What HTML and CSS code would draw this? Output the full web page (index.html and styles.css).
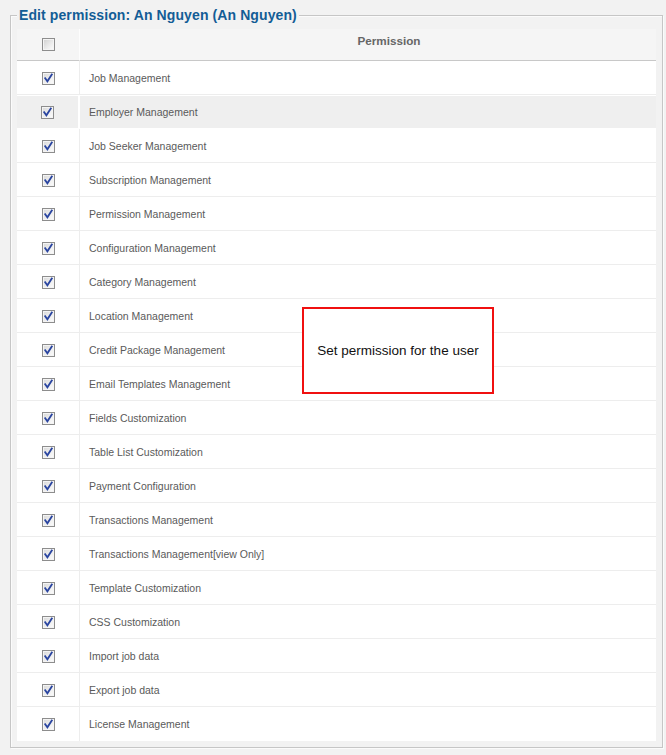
FILE: index.html
```html
<!DOCTYPE html>
<html>
<head>
<meta charset="utf-8">
<link rel="stylesheet" href="styles.css">
</head>
<body>
<fieldset class="perm">
  <legend class="perm-title">Edit permission: An Nguyen (An Nguyen)</legend>
  <table class="list">
    <thead>
      <tr>
        <th class="col-check"><span class="cb"></span></th>
        <th class="col-name">Permission</th>
      </tr>
    </thead>
    <tbody>
      <tr><td class="col-check"><span class="cb on"><svg viewBox="0 0 11 11"><polyline points="2.2,5.2 4.4,8.3 8.8,1.6"/></svg></span></td><td class="col-name">Job Management</td></tr>
      <tr class="hl"><td class="col-check"><span class="cb on"><svg viewBox="0 0 11 11"><polyline points="2.2,5.2 4.4,8.3 8.8,1.6"/></svg></span></td><td class="col-name">Employer Management</td></tr>
      <tr><td class="col-check"><span class="cb on"><svg viewBox="0 0 11 11"><polyline points="2.2,5.2 4.4,8.3 8.8,1.6"/></svg></span></td><td class="col-name">Job Seeker Management</td></tr>
      <tr><td class="col-check"><span class="cb on"><svg viewBox="0 0 11 11"><polyline points="2.2,5.2 4.4,8.3 8.8,1.6"/></svg></span></td><td class="col-name">Subscription Management</td></tr>
      <tr><td class="col-check"><span class="cb on"><svg viewBox="0 0 11 11"><polyline points="2.2,5.2 4.4,8.3 8.8,1.6"/></svg></span></td><td class="col-name">Permission Management</td></tr>
      <tr><td class="col-check"><span class="cb on"><svg viewBox="0 0 11 11"><polyline points="2.2,5.2 4.4,8.3 8.8,1.6"/></svg></span></td><td class="col-name">Configuration Management</td></tr>
      <tr><td class="col-check"><span class="cb on"><svg viewBox="0 0 11 11"><polyline points="2.2,5.2 4.4,8.3 8.8,1.6"/></svg></span></td><td class="col-name">Category Management</td></tr>
      <tr><td class="col-check"><span class="cb on"><svg viewBox="0 0 11 11"><polyline points="2.2,5.2 4.4,8.3 8.8,1.6"/></svg></span></td><td class="col-name">Location Management</td></tr>
      <tr><td class="col-check"><span class="cb on"><svg viewBox="0 0 11 11"><polyline points="2.2,5.2 4.4,8.3 8.8,1.6"/></svg></span></td><td class="col-name">Credit Package Management</td></tr>
      <tr><td class="col-check"><span class="cb on"><svg viewBox="0 0 11 11"><polyline points="2.2,5.2 4.4,8.3 8.8,1.6"/></svg></span></td><td class="col-name">Email Templates Management</td></tr>
      <tr><td class="col-check"><span class="cb on"><svg viewBox="0 0 11 11"><polyline points="2.2,5.2 4.4,8.3 8.8,1.6"/></svg></span></td><td class="col-name">Fields Customization</td></tr>
      <tr><td class="col-check"><span class="cb on"><svg viewBox="0 0 11 11"><polyline points="2.2,5.2 4.4,8.3 8.8,1.6"/></svg></span></td><td class="col-name">Table List Customization</td></tr>
      <tr><td class="col-check"><span class="cb on"><svg viewBox="0 0 11 11"><polyline points="2.2,5.2 4.4,8.3 8.8,1.6"/></svg></span></td><td class="col-name">Payment Configuration</td></tr>
      <tr><td class="col-check"><span class="cb on"><svg viewBox="0 0 11 11"><polyline points="2.2,5.2 4.4,8.3 8.8,1.6"/></svg></span></td><td class="col-name">Transactions Management</td></tr>
      <tr><td class="col-check"><span class="cb on"><svg viewBox="0 0 11 11"><polyline points="2.2,5.2 4.4,8.3 8.8,1.6"/></svg></span></td><td class="col-name">Transactions Management[view Only]</td></tr>
      <tr><td class="col-check"><span class="cb on"><svg viewBox="0 0 11 11"><polyline points="2.2,5.2 4.4,8.3 8.8,1.6"/></svg></span></td><td class="col-name">Template Customization</td></tr>
      <tr><td class="col-check"><span class="cb on"><svg viewBox="0 0 11 11"><polyline points="2.2,5.2 4.4,8.3 8.8,1.6"/></svg></span></td><td class="col-name">CSS Customization</td></tr>
      <tr><td class="col-check"><span class="cb on"><svg viewBox="0 0 11 11"><polyline points="2.2,5.2 4.4,8.3 8.8,1.6"/></svg></span></td><td class="col-name">Import job data</td></tr>
      <tr><td class="col-check"><span class="cb on"><svg viewBox="0 0 11 11"><polyline points="2.2,5.2 4.4,8.3 8.8,1.6"/></svg></span></td><td class="col-name">Export job data</td></tr>
      <tr><td class="col-check"><span class="cb on"><svg viewBox="0 0 11 11"><polyline points="2.2,5.2 4.4,8.3 8.8,1.6"/></svg></span></td><td class="col-name">License Management</td></tr>
    </tbody>
  </table>
</fieldset>
<div class="note">Set permission for the user</div>
</body>
</html>
```
FILE: styles.css
```css
html, body {
  margin: 0;
  padding: 0;
  background: #f2f2f2;
  font-family: "Liberation Sans", Arial, sans-serif;
}
body {
  position: relative;
  width: 666px;
  height: 755px;
  overflow: hidden;
}
.perm {
  margin: 7px 3px 0 10px;
  padding: 5px 6px 6px 6px;
  border: 1px solid #c6c6c6;
  box-shadow: inset 1px 1px 0 #fbfbfb, 1px 1px 0 #fbfbfb;
  min-width: 0;
}
.perm-title {
  padding: 0 2px;
  margin-left: 0;
  font-size: 14px;
  line-height: 17px;
  font-weight: bold;
  color: #135d96;
  letter-spacing: 0.1px;
  background: #f2f2f2;
}
.list {
  width: 639px;
  border-collapse: separate;
  border-spacing: 0;
  background: #fff;
}
.list th {
  height: 31px;
  padding: 0;
  background: #f5f5f5;
  border-bottom: 1px solid #c8c8c8;
  font-size: 11.7px;
  font-weight: bold;
  color: #666;
}
.list th.col-check {
  border-right: 1px solid #fdfdfd;
}
.list th.col-name {
  text-align: center;
  vertical-align: top;
  padding: 5px 0 0 42px;
  height: 26px;
  line-height: 14px;
}
.list td {
  height: 33px;
  padding: 0;
  border-bottom: 1px solid #ededed;
  font-size: 10.5px;
  color: #5a5a5a;
}
.list tr:last-child td {
  border-bottom: 0;
  height: 34px;
}
.col-check {
  width: 61px;
  text-align: center;
  border-right: 1px solid #ededed;
}
.list td.col-name {
  padding-left: 9px;
  text-align: left;
}
.list tr.hl td {
  background: #efefef;
  border-top: 1px solid #fff;
  border-bottom: 1px solid #fff;
  height: 32px;
}
.list tr.hl td.col-check {
  border-right: 2px solid #fff;
}
.cb {
  display: block;
  margin: 0 auto;
  box-sizing: border-box;
  width: 13px;
  height: 13px;
  border: 1px solid #8d8d8d;
  box-shadow: inset 0 0 0 1px #f4f4f4;
  background: linear-gradient(135deg, #cfcfcf 0%, #ededed 60%, #fdfdfd 100%);
}
.list td .cb {
  margin-top: 1px;
}
.cb.on {
  background: linear-gradient(135deg, #d8d8d8 0%, #f0f0f0 60%, #fdfdfd 100%);
}
.cb svg {
  display: block;
  width: 11px;
  height: 11px;
}
.cb svg polyline {
  fill: none;
  stroke: #2a45a0;
  stroke-width: 1.8;
  stroke-linecap: square;
  stroke-linejoin: miter;
}
.note {
  position: absolute;
  left: 302px;
  top: 307px;
  width: 188px;
  height: 83px;
  border: 2px solid #f01010;
  background: #fff;
  display: flex;
  align-items: center;
  justify-content: center;
  font-size: 13.5px;
  color: #111;
  font-family: "Liberation Sans", Arial, sans-serif;
}
```
